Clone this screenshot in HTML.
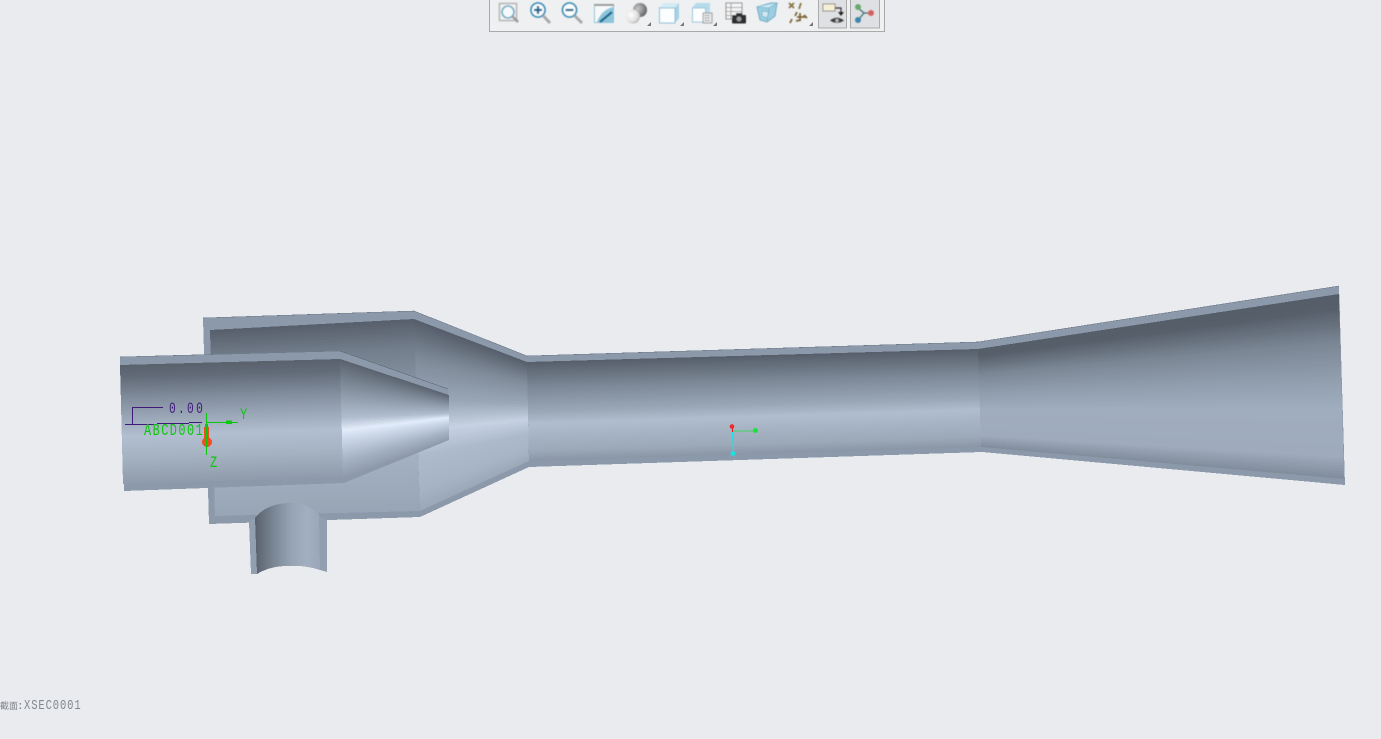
<!DOCTYPE html>
<html lang="zh">
<head>
<meta charset="utf-8">
<title>XSEC0001</title>
<style>
html,body{margin:0;padding:0;width:1381px;height:739px;overflow:hidden;background:#e9ebef}
svg{position:absolute;left:0;top:0}
.m{font-family:"Liberation Mono",monospace}
</style>
</head>
<body>
<svg width="1381" height="739" viewBox="0 0 1381 739" xmlns="http://www.w3.org/2000/svg">
<defs>
<linearGradient id="gMid" gradientUnits="userSpaceOnUse" x1="753" y1="355" x2="755" y2="456">
<stop offset="0" stop-color="#565e6a"/><stop offset=".25" stop-color="#7b8795"/><stop offset=".5" stop-color="#9aa7b6"/><stop offset=".62" stop-color="#b0bdce"/><stop offset=".9" stop-color="#9ba8b8"/><stop offset="1" stop-color="#8a96a5"/>
</linearGradient>
<linearGradient id="gFun" gradientUnits="userSpaceOnUse" x1="1160" y1="320" x2="1165" y2="468">
<stop offset="0" stop-color="#555d69"/><stop offset=".26" stop-color="#7a8694"/><stop offset=".62" stop-color="#a0adbe"/><stop offset="1" stop-color="#808c9b"/>
</linearGradient>
<linearGradient id="gPipe" gradientUnits="userSpaceOnUse" x1="255" y1="0" x2="320" y2="0">
<stop offset="0" stop-color="#59616d"/><stop offset=".25" stop-color="#76828f"/><stop offset=".55" stop-color="#96a3b3"/><stop offset=".8" stop-color="#a2afc0"/><stop offset="1" stop-color="#9aa7b8"/>
</linearGradient>
<radialGradient id="gBall1" cx=".35" cy=".4" r=".75"><stop offset="0" stop-color="#c8c8c8"/><stop offset=".55" stop-color="#8c8c8c"/><stop offset="1" stop-color="#505050"/></radialGradient>
<radialGradient id="gBall2" cx=".35" cy=".4" r=".75"><stop offset="0" stop-color="#ffffff"/><stop offset=".6" stop-color="#e2e2e2"/><stop offset="1" stop-color="#a5a5a5"/></radialGradient>
<filter id="b" x="-10%" y="-10%" width="120%" height="120%"><feGaussianBlur stdDeviation=".45"/></filter>
</defs>

<g shape-rendering="crispEdges">
<!-- rear box -->
<polygon points="203,318 414,311 420,517 209,524" fill="#8c99aa"/>
<g id="sBox"></g>
<!-- cone body -->
<polygon points="414,311 527,356 529,467 420,517" fill="#8c99aa"/>
<g id="sCone"></g>
<!-- middle tube -->
<polygon points="527,356 978,342 982,452 529,467" fill="#8c99aa"/>
<g id="sMid"><polygon points="527,362 978,349 981,447 529,461" fill="url(#gMid)"/></g>
<!-- funnel -->
<polygon points="978,342 1339,286 1345,485 982,452" fill="#8c99aa"/>
<g id="sFun"><polygon points="978,349 1339,294 1344,479 981,447" fill="url(#gFun)"/></g>
<polyline points="203,318 414,311 527,356 978,342 1339,286" fill="none" stroke="#6f7a88" stroke-width=".6"/>
<!-- pipe -->
<path d="M249,522 L255,518 L319,516 L327,520 L327,572 L320,570 Q305,565 288,566 Q270,566 257,574 L251,574 Z" fill="#929fb0"/>
<path d="M255,518 Q266,504 288,503 Q309,503 319,515 L320,570 Q305,565 288,566 Q270,566 257,574 Z" fill="url(#gPipe)"/>
<!-- front tube -->
<polygon points="120,357 340,351 344,483 124,491" fill="#8c99aa"/>
<g id="sFront"></g>
<!-- front cone -->
<polygon points="340,351 448,389 449,440 344,483" fill="#8c99aa"/>
<g id="sFC"></g>
<polyline points="340,351 448,389" fill="none" stroke="#5f6976" stroke-width=".6"/>
<polyline points="120,357 340,351" fill="none" stroke="#6f7a88" stroke-width=".6"/>
</g>

<!-- datum annotation -->
<g fill="none" shape-rendering="crispEdges">
<path d="M132.500,424V407.500H163" stroke="#3f1a78"/>
<path d="M125,424.500H157M157,423.500H189M189,422.500H202" stroke="#3f1a78"/>
<circle cx="207" cy="442" r="5" fill="#f0501e"/>
<rect x="204" y="427" width="5" height="14" fill="#f0501e"/>
<path d="M206.500,413V455M207,422.500H238" stroke="#0cc80c"/>
<path d="M226,420.500H232V424H226Z" fill="#0cc80c"/>
<rect x="205" y="424" width="3" height="4" fill="#0cc80c"/>
<rect x="205" y="441" width="3" height="5" fill="#0cc80c"/>
</g>
<g class="m">
<text transform="translate(169,413) scale(.7,1)" font-size="16" fill="#3f1a78" letter-spacing="3.300">0.00</text>
<text transform="translate(144,435) scale(.7,1)" font-size="17" fill="#0cc80c" letter-spacing="2.100">ABCD001</text>
<text transform="translate(240,419) scale(.75,1)" font-size="16" fill="#0cc80c">Y</text>
<text transform="translate(210,467) scale(.75,1)" font-size="16" fill="#0cc80c">Z</text>
</g>

<!-- center triad -->
<path d="M732.500,428V432" stroke="#e01818"/>
<path d="M733,431H755" stroke="#1ee03c" stroke-width=".8"/>
<path d="M732.500,432L733.500,453" stroke="#1edfe6" stroke-width="1.200"/>
<circle cx="732" cy="426.500" r="2.300" fill="#ee2a2a"/>
<circle cx="755.500" cy="430.500" r="2.500" fill="#1ee03c"/>
<circle cx="733" cy="453.500" r="2.500" fill="#1edfe6"/>

<!-- status -->
<text x="0" y="709" font-family="'Liberation Sans','Noto Sans CJK SC',sans-serif" font-size="9" fill="#7e838a">截面</text>
<text x="17" y="709" class="m" font-size="11" fill="#7e838a">:</text>
<text transform="translate(24,709) scale(.75,1)" class="m" font-size="14" fill="#83888f" letter-spacing="1.200">XSEC0001</text>

<!-- toolbar -->
<rect x="489.500" y="-2" width="395" height="33.500" fill="#eff0f2" stroke="#a9a9a9"/>
<rect x="818.500" y="-2" width="28" height="30" fill="#dfe0e3" stroke="#ababab"/>
<rect x="850.500" y="-2" width="29" height="30" fill="#dfe0e3" stroke="#ababab"/>

<g filter="url(#b)">
<!-- zoom window -->
<rect x="499.500" y="3.500" width="17" height="17" fill="#f2f3f4" stroke="#b4b4b4" stroke-width="1.500"/>
<circle cx="508" cy="12" r="6" fill="#f4fafc" stroke="#6ba9c2" stroke-width="1.600"/>
<path d="M512.500,16.500L518,22" stroke="#9a9a9a" stroke-width="2.600"/>
<!-- zoom in -->
<circle cx="538" cy="10" r="7" fill="#fbfdfe" stroke="#3f93b8" stroke-width="1.800"/>
<path d="M534,10H542M538,6V14" stroke="#14688f" stroke-width="2.200"/>
<path d="M543,15.500L550,23" stroke="#a8a8a8" stroke-width="2.800"/>
<!-- zoom out -->
<circle cx="569.500" cy="10" r="7" fill="#fbfdfe" stroke="#3f93b8" stroke-width="1.800"/>
<path d="M565.500,10H573.500" stroke="#14688f" stroke-width="2.200"/>
<path d="M574.500,15.500L582,23" stroke="#a8a8a8" stroke-width="2.800"/>
<!-- refit -->
<rect x="594" y="4" width="20" height="19" fill="#8cc5db"/>
<rect x="594" y="4" width="20" height="2" fill="#9a9a9a"/>
<path d="M595,6H613V7C605,9 600,14 597,22H595Z" fill="#f6f8f9"/>
<path d="M600,22L612,12" stroke="#17658a" stroke-width="2.200"/>
<!-- shading -->
<circle cx="640" cy="10" r="7" fill="url(#gBall1)"/>
<circle cx="633" cy="16.500" r="7" fill="url(#gBall2)"/>
<!-- cube -->
<path d="M659,8L664,3H679V18L675,23V8Z" fill="#a5d2e5"/>
<path d="M659,8L664,3H679L675,8Z" fill="#d4ebf3"/>
<rect x="659.500" y="8" width="15.500" height="15" fill="#fcfdfe" stroke="#86bfd6"/>
<!-- view manager cube -->
<path d="M692,8L696,3H710V14H705V8Z" fill="#b6dbe9"/>
<rect x="692.500" y="8" width="13" height="14" fill="#fcfdfe" stroke="#94c6da"/>
<rect x="703" y="13" width="9" height="10" fill="#e6e6e6" stroke="#8a8a8a" stroke-width=".8"/>
<path d="M705,15.500H710M705,18H710M705,20.500H710" stroke="#777" stroke-dasharray="1.500 1"/>
<!-- table + camera -->
<rect x="726" y="3" width="16" height="16" fill="#f4f4f4" stroke="#909090"/>
<path d="M726,7.500H742M726,11.500H742M726,15.500H742M731,3V19" stroke="#909090" stroke-width=".8"/>
<rect x="732" y="15" width="14" height="8.500" rx="1" fill="#2e2e2e"/>
<rect x="736" y="13" width="6" height="2.500" fill="#2e2e2e"/>
<circle cx="739" cy="19" r="2.500" fill="#9a9a9a"/>
<!-- wire cube -->
<path d="M757,7L771,3H777L775,16L767,22L760,20Z" fill="#9ccde0" stroke="#6aaac6"/>
<path d="M757,7L769,8L777,3M769,8L767,22M762,11L769,12L767,18L762,16Z" fill="#d0e8f1" stroke="#79b4cc" stroke-width=".8"/>
<!-- datum display -->
<path d="M789,3L794,8M794,3L789,8M801,3L799,9" stroke="#8a7448" stroke-width="1.800" fill="none"/>
<path d="M797,12L795,16M790,23L792,19M797,17H806M800,13V21M804,15L807,18M796,21L801,20" stroke="#7a6535" stroke-width="1.700" fill="none"/>
<!-- annotation -->
<rect x="823" y="4" width="12" height="7" fill="#f8f0d4" stroke="#8f8f8f"/>
<path d="M835,8H841V13" stroke="#333" stroke-width="1.200" fill="none"/>
<path d="M838,12H844L841,16Z" fill="#222"/>
<path d="M830,20.500Q837,15 844,20.500Q837,25 830,20.500Z" fill="#3a3a3a"/>
<circle cx="837" cy="20.500" r="1.800" fill="#b5b5b5"/>
<!-- relations -->
<path d="M858,8L864,13L870,13M864,13L859,19" stroke="#3f6f73" stroke-width="1.300" fill="none"/>
<circle cx="858" cy="7" r="3" fill="#66aa6a"/>
<circle cx="871" cy="13" r="3" fill="#d46262"/>
<circle cx="858" cy="20" r="3" fill="#3c86ae"/>
</g>
<!-- dropdown corners -->
<g fill="#777">
<path d="M651,22V26H647Z"/><path d="M684,22V26H680Z"/><path d="M717,22V26H713Z"/><path d="M813,22V26H809Z"/>
</g>
</svg>
<script>
(function(){
var NS="http://www.w3.org/2000/svg";
function hex(c){return [parseInt(c.substr(1,2),16),parseInt(c.substr(3,2),16),parseInt(c.substr(5,2),16)];}
function col(st,t){
  for(var i=0;i<st.length-1;i++){
    if(t<=st[i+1][0]){
      var k=(t-st[i][0])/(st[i+1][0]-st[i][0]),a=hex(st[i][1]),b=hex(st[i+1][1]);
      return "rgb("+Math.round(a[0]+(b[0]-a[0])*k)+","+Math.round(a[1]+(b[1]-a[1])*k)+","+Math.round(a[2]+(b[2]-a[2])*k)+")";
    }
  }
  return st[st.length-1][1];
}
function warp(t,m,to){return t<m?t*to/m:to+(t-m)*(1-to)/(1-m);}
function fan(id,A,B,C,D,st,wl,wr,mid){
  var g=document.getElementById(id),n=70;
  for(var i=0;i<n;i++){
    var t=i/n,tl=wl?warp(t,mid,wl):t,tr=wr?warp(t,mid,wr):t,p=document.createElementNS(NS,"polygon");
    var x1=A[0]+(D[0]-A[0])*tl,y1=A[1]+(D[1]-A[1])*tl,x2=B[0]+(C[0]-B[0])*tr,y2=B[1]+(C[1]-B[1])*tr;
    p.setAttribute("points",x1+","+y1+" "+x2+","+y2+" "+C[0]+","+C[1]+" "+D[0]+","+D[1]);
    p.setAttribute("fill",col(st,(i+.5)/n));
    g.appendChild(p);
  }
}
fan("sBox",[210,330],[414,319],[420,511],[215,516],[[0,"#565e6a"],[.15,"#737e8c"],[.5,"#98a5b5"],[.65,"#a6b3c4"],[1,"#98a5b5"]]);
fan("sCone",[414,319],[527,362],[529,461],[420,511],[[0,"#555d69"],[.2,"#7e8a98"],[.42,"#9aa7b7"],[.58,"#c6d2e2"],[.72,"#adbacb"],[.9,"#a6b3c4"],[1,"#9aa7b7"]]);
fan("sMid",[527,362],[978,349],[981,447],[529,461],[[0,"#565e6a"],[.25,"#7b8795"],[.5,"#9aa7b6"],[.62,"#b0bdce"],[.9,"#9ba8b8"],[1,"#8a96a5"]]);
fan("sFun",[978,349],[1339,294],[1344,479],[981,447],[[0,"#555d69"],[.08,"#575f6b"],[.26,"#7a8694"],[.44,"#8f9cac"],[.62,"#a0adbe"],[.88,"#9fabbc"],[1,"#808c9b"]]);
fan("sFront",[120,365],[340,359],[344,477],[123,484],[[0,"#59616d"],[.1,"#626b78"],[.3,"#8490a0"],[.6,"#b2bfd0"],[.8,"#a3b0c0"],[1,"#8f9bab"]]);
fan("sFC",[340,359],[449,395],[449,440],[343,478],[[0,"#5a626e"],[.2,"#7f8b99"],[.46,"#b0bdce"],[.56,"#e2ecfa"],[.63,"#cfdbeb"],[.85,"#a3b0c1"],[1,"#8f9bab"]],.6,.5,.56);
})();
</script>
</body>
</html>
